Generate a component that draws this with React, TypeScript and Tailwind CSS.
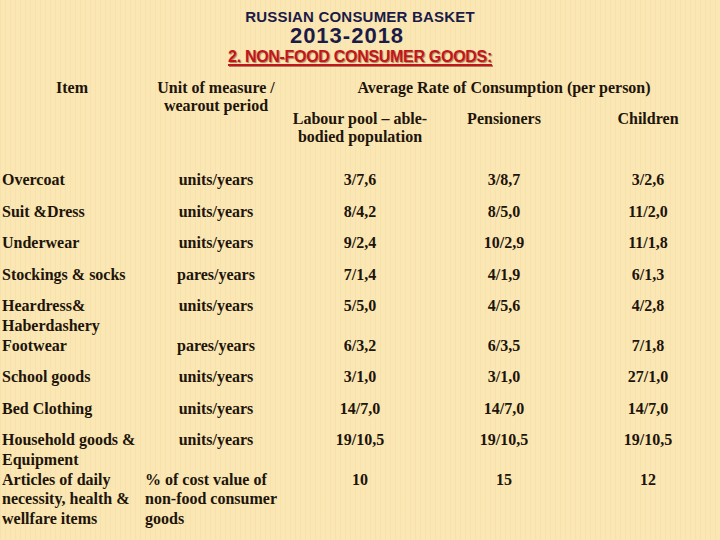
import React from "react"

type Row = {
	item: string[]
	unit: string[]
	unitLeftFrom?: number
	a: string[]
	b: string[]
	c: string[]
}

const rows: Row[] = [
	{ item: ["Overcoat"], unit: ["units/years"], a: ["3/7,6"], b: ["3/8,7"], c: ["3/2,6"] },
	{ item: ["Suit &Dress"], unit: ["units/years"], a: ["8/4,2"], b: ["8/5,0"], c: ["11/2,0"] },
	{ item: ["Underwear"], unit: ["units/years"], a: ["9/2,4"], b: ["10/2,9"], c: ["11/1,8"] },
	{ item: ["Stockings & socks"], unit: ["pares/years"], a: ["7/1,4"], b: ["4/1,9"], c: ["6/1,3"] },
	{
		item: ["Heardress&", "Haberdashery", "Footwear"],
		unit: ["units/years", "", "pares/years"],
		a: ["5/5,0", "", "6/3,2"],
		b: ["4/5,6", "", "6/3,5"],
		c: ["4/2,8", "", "7/1,8"],
	},
	{ item: ["School goods"], unit: ["units/years"], a: ["3/1,0"], b: ["3/1,0"], c: ["27/1,0"] },
	{ item: ["Bed Clothing"], unit: ["units/years"], a: ["14/7,0"], b: ["14/7,0"], c: ["14/7,0"] },
	{
		item: ["Household goods &", "Equipment", "Articles of daily", "necessity, health &", "wellfare items"],
		unit: ["units/years", "", "% of cost value of", "non-food consumer", "goods"],
		unitLeftFrom: 2,
		a: ["19/10,5", "", "10"],
		b: ["19/10,5", "", "15"],
		c: ["19/10,5", "", "12"],
	},
]

function Lines({ lines, align, leftFrom }: { lines: string[]; align: "left" | "center"; leftFrom?: number }) {
	return (
		<div className="flex flex-col">
			{lines.map((l, i) => {
				const left = align === "left" || (leftFrom !== undefined && i >= leftFrom)
				return (
					<div
						key={i}
						className={left ? "h-[19.6px] leading-[19.6px] whitespace-nowrap text-left pl-[1px]" : "h-[19.6px] leading-[19.6px] whitespace-nowrap text-center"}>
						{l}
					</div>
				)
			})}
		</div>
	)
}

export default function App() {
	return (
		<div className="w-[720px] h-[540px] overflow-hidden bg-[#fbe7b4] bg-[repeating-linear-gradient(90deg,rgba(190,150,70,0.07)_0px,rgba(190,150,70,0.07)_1px,transparent_1px,transparent_5px)] text-[#20140a] font-['Liberation_Serif',serif] font-bold">
			{/* title */}
			<div className="flex flex-col items-center pt-[8px] font-['Liberation_Sans',Arial,sans-serif]">
				<div className="text-[15px] leading-[18px] text-[#1b1b47] tracking-[0.2px]">RUSSIAN CONSUMER BASKET</div>
				<div className="mr-[26px] text-[22px] leading-[20px] text-[#1b1b47] tracking-[1px]">2013-2018</div>
				<div className="mt-[1px] text-[16px] leading-[20px] text-[#c1161b] underline decoration-[1.5px] underline-offset-[2px] tracking-[-0.3px] [text-shadow:1px_1px_1px_rgba(70,0,0,0.45)]">
					2. NON-FOOD CONSUMER GOODS:
				</div>
			</div>

			{/* header */}
			<div className="mt-[12px] grid grid-cols-[144px_144px_144px_144px_144px] text-[16px] leading-[18px]">
				<div className="row-span-2 text-center">Item</div>
				<div className="row-span-2 text-center">
					Unit of measure /
					<br />
					wearout period
				</div>
				<div className="col-span-3 text-center pb-[13px]">Average Rate of Consumption (per person)</div>
				<div className="text-center">
					Labour pool – able-
					<br />
					bodied population
				</div>
				<div className="text-center">Pensioners</div>
				<div className="text-center">Children</div>
			</div>

			{/* body */}
			<div className="mt-[18px] flex flex-col text-[16px]">
				{rows.map((r, i) => (
					<div key={i} className="grid grid-cols-[144px_144px_144px_144px_144px] py-[6px]">
						<div className="pl-[1px]">
							<Lines lines={r.item} align="left" />
						</div>
						<Lines lines={r.unit} align="center" leftFrom={r.unitLeftFrom} />
						<Lines lines={r.a} align="center" />
						<Lines lines={r.b} align="center" />
						<Lines lines={r.c} align="center" />
					</div>
				))}
			</div>
		</div>
	)
}
